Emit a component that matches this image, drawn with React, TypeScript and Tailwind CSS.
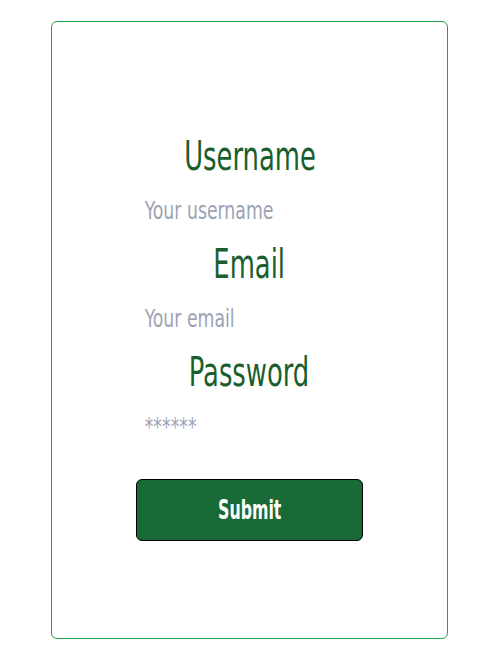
import { useState } from "react";

// no Oswald here, so a condensed face squeezed a little further
const font = { fontFamily: '"DejaVu Sans Condensed", "Liberation Sans", sans-serif' };

function Field({
  label,
  type,
  placeholder,
  value,
  onChange,
}: {
  label: string;
  type: string;
  placeholder: string;
  value: string;
  onChange: (v: string) => void;
}) {
  return (
    <>
      <label className="flex h-[54px] w-[226px] items-center justify-center text-[41px] text-[#1b5e2e]">
        <span className="inline-block scale-x-[0.7] whitespace-nowrap">{label}</span>
      </label>
      <div className="flex h-[54px] w-[226px] items-center">
        <input
          type={type}
          value={value}
          onChange={(e) => onChange(e.target.value)}
          placeholder={placeholder}
          className="w-[290px] shrink-0 origin-left scale-x-[0.77] bg-transparent px-[10px] text-[25px] text-gray-700 outline-none placeholder:text-[#9ca3b4]"
          style={font}
        />
      </div>
    </>
  );
}

export default function App() {
  const [username, setUsername] = useState("");
  const [email, setEmail] = useState("");
  const [password, setPassword] = useState("");

  return (
    <div className="min-h-[662px] bg-white px-[51px] pt-[21px]" style={font}>
      <form
        onSubmit={(e) => e.preventDefault()}
        className="flex h-[618px] w-[397px] flex-col items-center rounded-md border border-[#1fa34f] pt-[108px]"
      >
        <Field label="Username" type="text" placeholder="Your username" value={username} onChange={setUsername} />
        <Field label="Email" type="email" placeholder="Your email" value={email} onChange={setEmail} />
        <Field label="Password" type="password" placeholder="******" value={password} onChange={setPassword} />
        <button
          type="submit"
          className="mt-[25px] h-[62px] w-[227px] rounded-md border border-black bg-[#186a37] text-[27px] font-bold text-white"
          style={font}
        >
          <span className="inline-block scale-x-[0.65]">Submit</span>
        </button>
      </form>
    </div>
  );
}
